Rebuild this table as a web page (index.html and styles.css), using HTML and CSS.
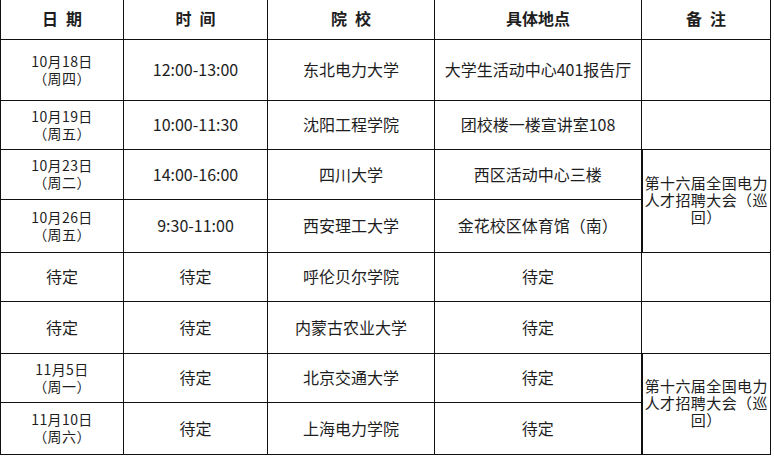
FILE: index.html
```html
<!DOCTYPE html>
<html lang="zh">
<head>
<meta charset="utf-8">
<title>宣讲会安排</title>
<link rel="stylesheet" href="styles.css">
</head>
<body>
<table class="schedule">
  <colgroup>
    <col class="c-date">
    <col class="c-time">
    <col class="c-school">
    <col class="c-place">
    <col class="c-note">
  </colgroup>
  <thead>
    <tr class="r-head">
      <th>日&ensp;期</th>
      <th>时&ensp;间</th>
      <th>院&ensp;校</th>
      <th>具体地点</th>
      <th>备&ensp;注</th>
    </tr>
  </thead>
  <tbody>
    <tr class="r1">
      <td class="date">10月18日<br>（周四）</td>
      <td>12:00-13:00</td>
      <td>东北电力大学</td>
      <td>大学生活动中心401报告厅</td>
      <td></td>
    </tr>
    <tr class="r2">
      <td class="date">10月19日<br>（周五）</td>
      <td>10:00-11:30</td>
      <td>沈阳工程学院</td>
      <td>团校楼一楼宣讲室108</td>
      <td></td>
    </tr>
    <tr class="r3">
      <td class="date">10月23日<br>（周二）</td>
      <td>14:00-16:00</td>
      <td>四川大学</td>
      <td>西区活动中心三楼</td>
      <td class="note" rowspan="2">第十六届全国电力<br>人才招聘大会（巡<br>回）</td>
    </tr>
    <tr class="r4">
      <td class="date">10月26日<br>（周五）</td>
      <td>9:30-11:00</td>
      <td>西安理工大学</td>
      <td>金花校区体育馆（南）</td>
    </tr>
    <tr class="r5">
      <td>待定</td>
      <td>待定</td>
      <td>呼伦贝尔学院</td>
      <td>待定</td>
      <td></td>
    </tr>
    <tr class="r6">
      <td>待定</td>
      <td>待定</td>
      <td>内蒙古农业大学</td>
      <td>待定</td>
      <td></td>
    </tr>
    <tr class="r7">
      <td class="date">11月5日<br>（周一）</td>
      <td>待定</td>
      <td>北京交通大学</td>
      <td>待定</td>
      <td class="note" rowspan="2">第十六届全国电力<br>人才招聘大会（巡<br>回）</td>
    </tr>
    <tr class="r8">
      <td class="date">11月10日<br>（周六）</td>
      <td>待定</td>
      <td>上海电力学院</td>
      <td>待定</td>
    </tr>
  </tbody>
</table>
</body>
</html>
```

FILE: styles.css
```css
html, body {
  margin: 0;
  padding: 0;
  background: #ffffff;
}

body {
  font-family: "Noto Sans CJK SC", "Noto Sans", sans-serif;
  color: #1e1e1e;
}

.schedule {
  border-collapse: collapse;
  table-layout: fixed;
  width: 770px;
}

.c-date { width: 123px; }
.c-time { width: 144px; }
.c-school { width: 167px; }
.c-place { width: 207px; }
.c-note { width: 129px; }

.schedule th,
.schedule td {
  border: 1px solid #111111;
  padding: 0;
  text-align: center;
  vertical-align: middle;
  font-size: 16px;
  line-height: 19px;
  font-weight: normal;
  white-space: nowrap;
}

.schedule th {
  border-top: none;
  font-weight: bold;
  font-size: 16px;
  padding-bottom: 2px;
}

.schedule td.date {
  font-size: 14px;
  line-height: 17px;
  letter-spacing: 0.4px;
}

.schedule td.note {
  font-size: 15px;
  line-height: 17px;
  letter-spacing: 0.4px;
  border-left: 2px solid #111111;
  padding-bottom: 2px;
}

.r-head { height: 39px; }
.r1 { height: 61px; }
.r2 { height: 49px; }
.r3 { height: 50px; }
.r4 { height: 53px; }
.r5 { height: 49px; }
.r6 { height: 52px; }
.r7 { height: 49px; }
.r8 { height: 52px; }
```
